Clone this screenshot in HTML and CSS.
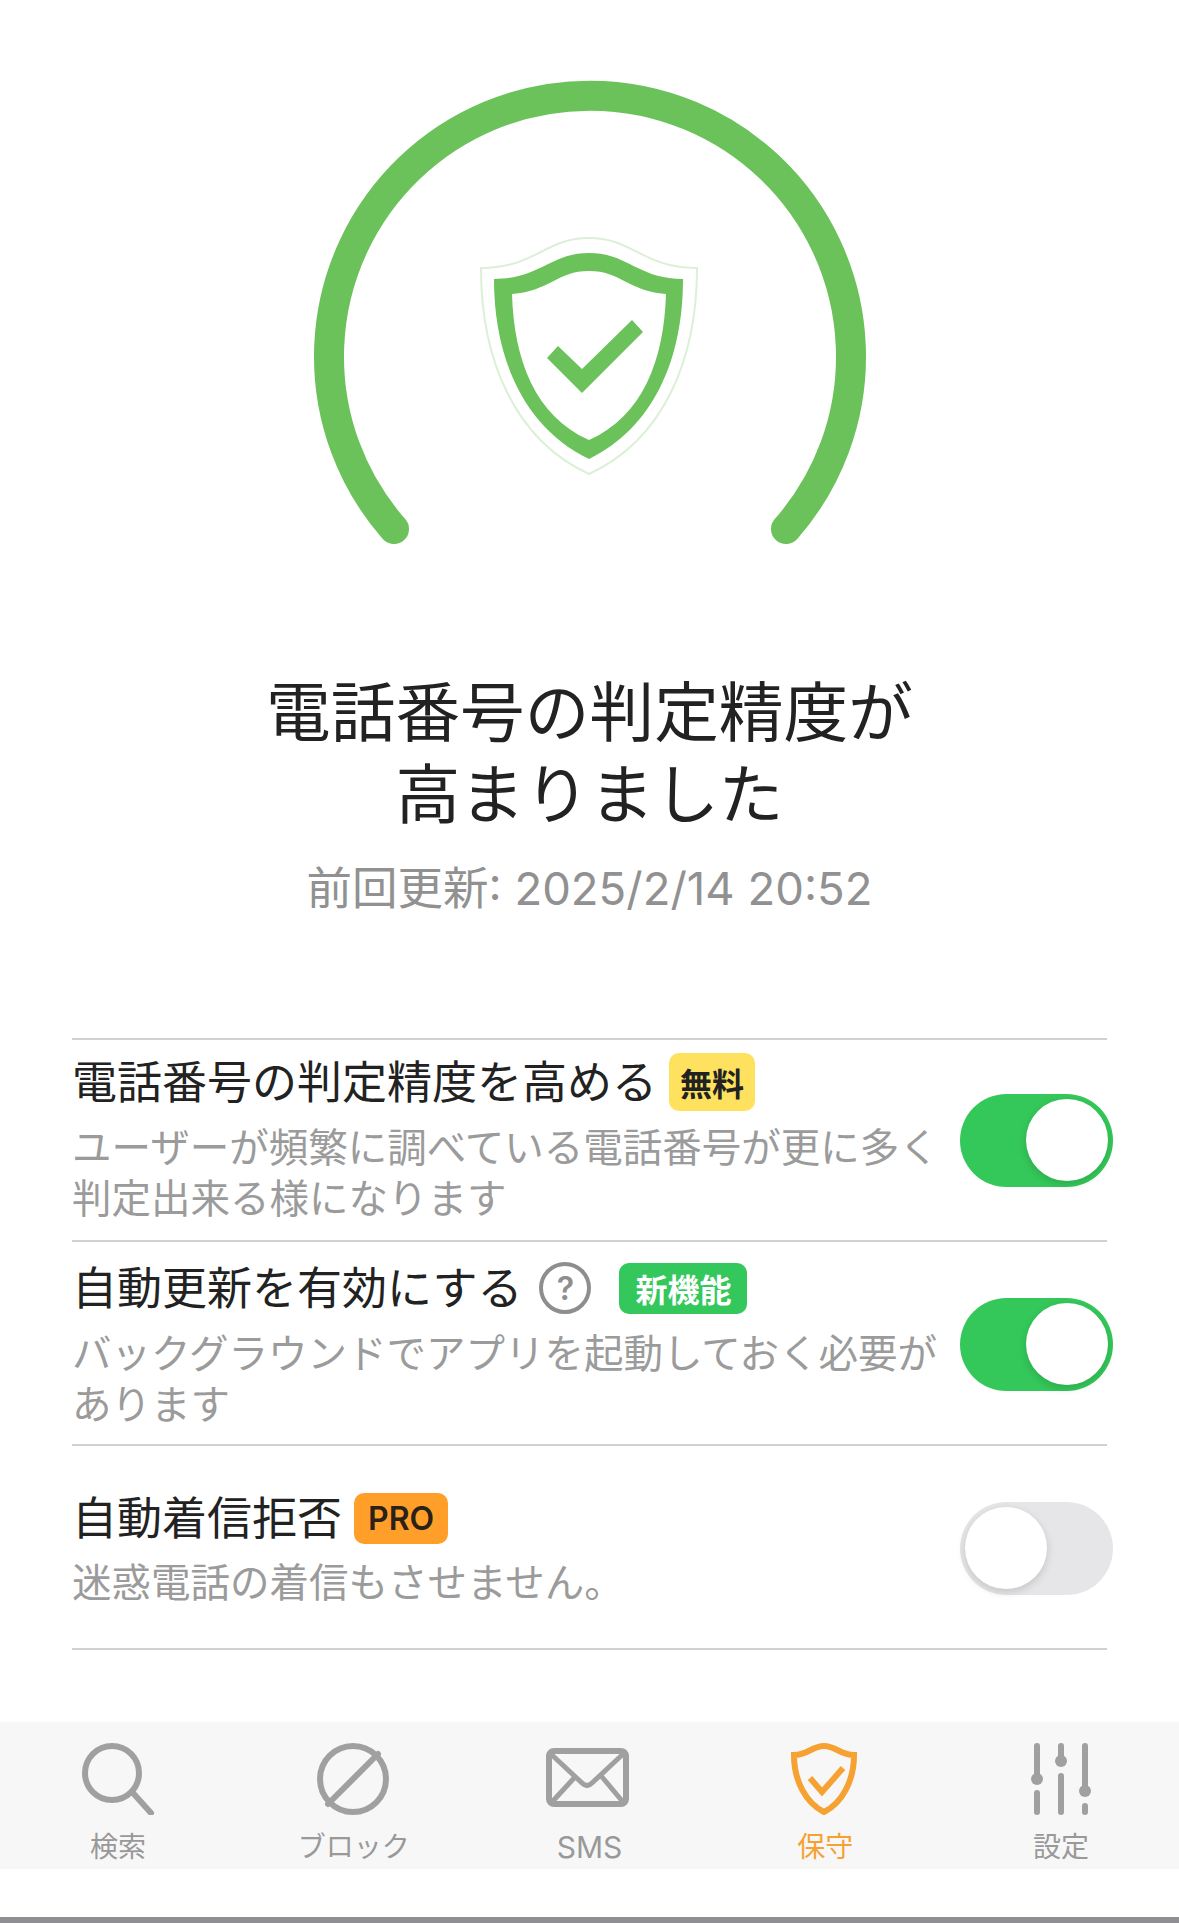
FILE: index.html
```html
<!DOCTYPE html>
<html lang="ja">

<head>
    <meta charset="UTF-8">
    <title>保守</title>
    <link rel="stylesheet" href="styles.css">
</head>

<body>
    <main class="screen">
        <svg class="hero" viewBox="0 0 1179 560">
            <path class="hero-arc" d="M394 529 A261 261 0 1 1 786 529" />
            <path class="hero-halo" d="M481 268 C535 268 545 238 589 238 C633 238 643 268 697 268 C697 360 663 440 589 474 C515 440 481 360 481 268 Z" />
            <path class="hero-shield" fill-rule="evenodd" d="M494 279 C540 279 550 253 589 253 C628 253 638 279 683 279 C683 360 653 428 589 459 C525 428 494 360 494 279 Z M512 294 C550 291 557 271 589 271 C621 271 628 291 666 294 C664 360 643 416 589 440 C535 416 514 360 512 294 Z" />
            <path class="hero-shield" d="M547 358 L558 346 L582 369 L632 320 L643 332 L582 393 Z" />
        </svg>

        <h1 class="title">電話番号の判定精度が<br>高まりました</h1>
        <p class="updated">前回更新: 2025/2/14 20:52</p>

        <section class="settings">
            <div class="row row-first">
                <div class="row-text">
                    <div class="row-title">
                        <span>電話番号の判定精度を高める</span>
                        <span class="badge badge-free">無料</span>
                    </div>
                    <p class="row-note">ユーザーが頻繁に調べている電話番号が更に多く判定出来る様になります</p>
                </div>
                <div class="toggle toggle-on"><div class="knob"></div></div>
            </div>

            <div class="row">
                <div class="row-text">
                    <div class="row-title">
                        <span>自動更新を有効にする</span>
                        <span class="help">?</span>
                        <span class="badge badge-new">新機能</span>
                    </div>
                    <p class="row-note">バックグラウンドでアプリを起動しておく必要があります</p>
                </div>
                <div class="toggle toggle-on"><div class="knob"></div></div>
            </div>

            <div class="row">
                <div class="row-text">
                    <div class="row-title">
                        <span>自動着信拒否</span>
                        <span class="badge badge-pro">PRO</span>
                    </div>
                    <p class="row-note">迷惑電話の着信もさせません。</p>
                </div>
                <div class="toggle"><div class="knob"></div></div>
            </div>
        </section>

        <nav class="tabbar">
            <div class="tab">
                <svg class="tab-icon" viewBox="0 0 90 72">
                    <circle cx="39" cy="30" r="27" />
                    <path d="M60 50 L78 70" />
                </svg>
                <span>検索</span>
            </div>
            <div class="tab">
                <svg class="tab-icon" viewBox="0 0 90 72">
                    <circle cx="44" cy="36" r="33" />
                    <path d="M69 11 L19 61" />
                </svg>
                <span>ブロック</span>
            </div>
            <div class="tab">
                <svg class="tab-icon" viewBox="0 0 90 72">
                    <rect x="5" y="8" width="77" height="53" rx="5" />
                    <path class="thin" d="M8 12 L38 40 Q43 45 48 40 L78 12 M31 34 L8 59 M58 34 L79 59" />
                </svg>
                <span class="tab-latin">SMS</span>
            </div>
            <div class="tab tab-active">
                <svg class="tab-icon" viewBox="0 0 90 72">
                    <path d="M14 12 C28 12 32 3 44 3 C56 3 60 12 74 12 C74 38 62 60 44 69 C26 60 14 38 14 12 Z" />
                    <path d="M30 35 L42 49 L63 25" />
                </svg>
                <span>保守</span>
            </div>
            <div class="tab">
                <svg class="tab-icon" viewBox="0 0 90 72">
                    <path d="M21 3 V36 M21 50 V69 M45 3 V18 M45 33 V69 M69 3 V48 M69 63 V69" />
                    <circle class="dot" cx="21" cy="36" r="6" />
                    <circle class="dot" cx="45" cy="18" r="6" />
                    <circle class="dot" cx="69" cy="48" r="6" />
                </svg>
                <span>設定</span>
            </div>
        </nav>

        <div class="home-bar"></div>
    </main>
</body>

</html>
```

FILE: styles.css
```css
* {
    box-sizing: border-box;
    margin: 0;
    padding: 0;
}

body {
    background: #fff;
    font-family: Inter, "Noto Sans CJK JP", sans-serif;
}

.screen {
    display: flex;
    flex-direction: column;
    width: 1179px;
    height: 1923px;
    overflow: hidden;
}

.hero {
    display: block;
    width: 1179px;
    height: 560px;
    flex: none;
}

.hero-arc {
    fill: none;
    stroke: #6cc25a;
    stroke-width: 30;
    stroke-linecap: round;
}

.hero-halo {
    fill: none;
    stroke: #dcefd7;
    stroke-width: 2;
}

.hero-shield {
    fill: #6cc25a;
}

.title {
    margin-top: 112px;
    font-size: 64.7px;
    font-weight: 400;
    line-height: 82px;
    text-align: center;
    color: #222;
}

.updated {
    margin-top: 25px;
    font-size: 45.5px;
    line-height: 56px;
    text-align: center;
    color: #919191;
}

.settings {
    margin: 121px 72px 0;
    border-bottom: 2px solid #d0d0d0;
}

.row {
    display: flex;
    align-items: center;
    height: 204px;
    border-top: 2px solid #d0d0d0;
}

.row-first {
    height: 202px;
}

.row-text {
    flex: 1;
}

.row-first .row-text {
    padding-bottom: 6px;
}

.row-title {
    display: flex;
    align-items: center;
    gap: 12px;
    height: 60px;
    font-size: 45px;
    color: #222;
}

.row-note {
    width: 880px;
    margin-top: 13px;
    font-size: 39.5px;
    line-height: 51px;
    color: #9b9b9b;
}

.badge {
    display: flex;
    align-items: center;
    justify-content: center;
    height: 51px;
    margin-top: 5px;
    padding: 0 16px;
    border-radius: 10px;
    font-size: 32px;
    font-weight: 700;
}

.badge-free {
    height: 58px;
    padding: 0 11px;
    background: #fde15f;
    color: #222;
}

.badge-new {
    margin-left: 16px;
    background: #34c75b;
    color: #fff;
}

.badge-pro {
    margin-top: 7px;
    padding: 0 14px;
    background: #ff9f2a;
    color: #2b2118;
    font-weight: 600;
}

.help {
    display: flex;
    align-items: center;
    justify-content: center;
    width: 52px;
    height: 52px;
    margin-top: 5px;
    margin-left: 5px;
    border: 4px solid #8e8e8e;
    border-radius: 50%;
    font-size: 32px;
    font-weight: 600;
    color: #8e8e8e;
}

.toggle {
    flex: none;
    display: flex;
    align-items: center;
    width: 153px;
    height: 93px;
    margin-top: 2px;
    margin-right: -6px;
    padding: 0 5px;
    border-radius: 47px;
    background: #e6e6e9;
}

.row-first .toggle {
    margin-top: 0;
}

.toggle-on {
    justify-content: flex-end;
    background: #34c85a;
}

.knob {
    width: 82px;
    height: 82px;
    border-radius: 50%;
    background: #fff;
    box-shadow: 0 3px 8px rgba(0, 0, 0, 0.15);
}

.tabbar {
    display: grid;
    grid-template-columns: repeat(5, 1fr);
    height: 147px;
    margin-top: 72px;
    padding-top: 21px;
    background: #f7f7f7;
}

.tab {
    display: flex;
    flex-direction: column;
    align-items: center;
    font-size: 28px;
    line-height: 34px;
    color: #999;
}

.tab-latin {
    font-size: 30px;
}

.tab-icon {
    width: 90px;
    height: 72px;
    margin-bottom: 15px;
    fill: none;
    stroke: #a0a0a0;
    stroke-width: 6;
    stroke-linecap: round;
}

.tab-icon .thin {
    stroke-width: 5;
}

.tab-icon .dot {
    fill: #a0a0a0;
    stroke: none;
}

.tab-active {
    color: #f6a233;
}

.tab-active .tab-icon {
    stroke: #f6a233;
    stroke-linecap: butt;
}

.home-bar {
    height: 6px;
    margin-top: 48px;
    background: #8e8e93;
}
```
